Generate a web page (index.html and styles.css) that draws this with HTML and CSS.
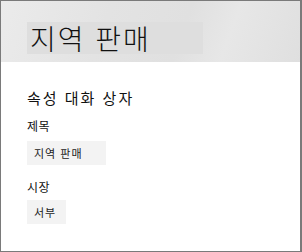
FILE: index.html
```html
<!DOCTYPE html>
<html lang="ko">
<head>
<meta charset="UTF-8">
<title>지역 판매</title>
<link rel="stylesheet" href="styles.css">
</head>
<body>
    <div class="dialog">
        <div class="banner">
            <div class="banner-title">지역 판매</div>
        </div>
        <div class="content">
            <div class="dialog-heading">속성 대화 상자</div>
            <div class="field">
                <label class="field-label">제목</label>
                <div class="field-box field-wide">지역 판매</div>
            </div>
            <div class="field">
                <label class="field-label">시장</label>
                <div class="field-box">서부</div>
            </div>
        </div>
    </div>
</body>
</html>
```

FILE: styles.css
```css
body {
    margin: 0;
    font-family: "Noto Sans CJK KR", "Noto Sans", sans-serif;
    background-color: #FFFFFF;
    color: #111111;
}
.dialog {
    width: 302px;
    height: 252px;
    box-sizing: border-box;
    border: 1px solid #7A7A7A;
    border-right-width: 2px;
    background-color: #FFFFFF;
}
.banner {
    height: 61px;
    background: linear-gradient(110deg, #EBEBEB 0%, #E3E3E3 35%, #E0E0E0 60%, #E7E7E7 75%, #DFDFDF 100%);
    padding-top: 21px;
    padding-left: 26px;
    box-sizing: border-box;
}
.banner-title {
    width: 176px;
    height: 32px;
    padding-left: 3px;
    box-sizing: border-box;
    background-color: #DEDEDE;
    font-size: 28px;
    font-weight: 300;
    letter-spacing: 2px;
    line-height: 32px;
    color: #111111;
}
.content {
    padding: 26px 0 0 26px;
}
.dialog-heading {
    font-size: 15px;
    line-height: 20px;
    letter-spacing: 2px;
    margin-bottom: 10px;
}
.field {
    display: flex;
    flex-direction: column;
    align-items: flex-start;
    gap: 7px;
    margin-bottom: 14px;
}
.field + .field {
    gap: 5px;
}
.field-label {
    font-size: 12px;
    line-height: 16px;
    letter-spacing: 0.5px;
}
.field-box {
    height: 24px;
    padding: 0 10px 0 7px;
    background-color: #F3F3F3;
    font-size: 11px;
    line-height: 24px;
    letter-spacing: 1px;
    color: #222222;
}
.field-wide {
    width: 79px;
    box-sizing: border-box;
}
```
